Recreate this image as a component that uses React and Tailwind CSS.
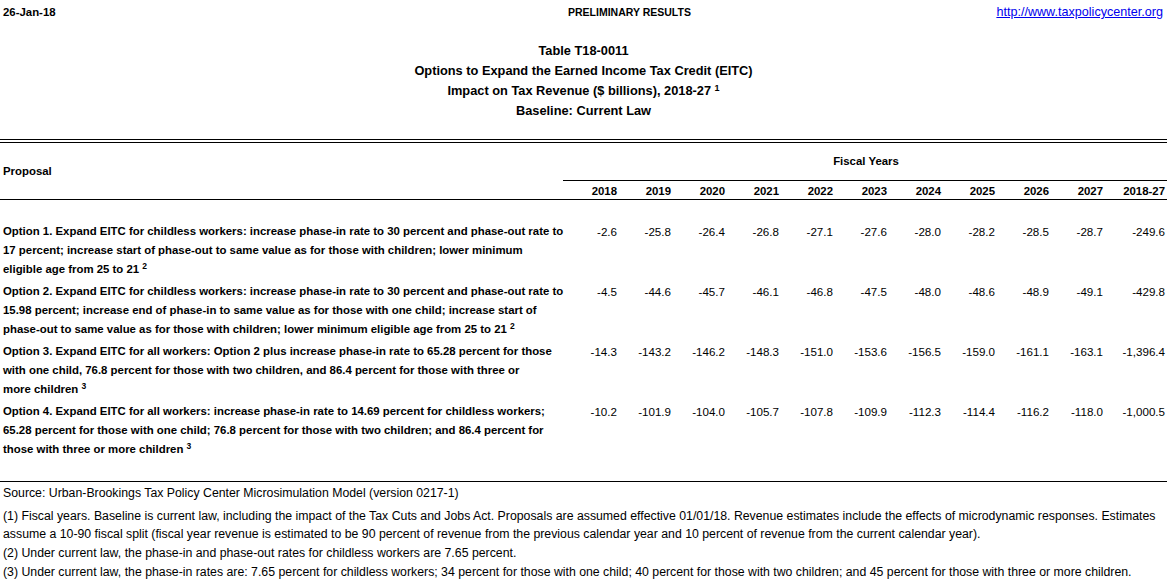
const years = ['2018', '2019', '2020', '2021', '2022', '2023', '2024', '2025', '2026', '2027'];

const rows = [
  {
    lines: [
      'Option 1. Expand EITC for childless workers: increase phase-in rate to 30 percent and phase-out rate to',
      '17 percent; increase start of phase-out to same value as for those with children; lower minimum',
      'eligible age from 25 to 21',
    ],
    note: '2',
    vals: ['-2.6', '-25.8', '-26.4', '-26.8', '-27.1', '-27.6', '-28.0', '-28.2', '-28.5', '-28.7', '-249.6'],
  },
  {
    lines: [
      'Option 2. Expand EITC for childless workers: increase phase-in rate to 30 percent and phase-out rate to',
      '15.98 percent; increase end of phase-in to same value as for those with one child; increase start of',
      'phase-out to same value as for those with children; lower minimum eligible age from 25 to 21',
    ],
    note: '2',
    vals: ['-4.5', '-44.6', '-45.7', '-46.1', '-46.8', '-47.5', '-48.0', '-48.6', '-48.9', '-49.1', '-429.8'],
  },
  {
    lines: [
      'Option 3. Expand EITC for all workers: Option 2 plus increase phase-in rate to 65.28 percent for those',
      'with one child, 76.8 percent for those with two children, and 86.4 percent for those with three or',
      'more children',
    ],
    note: '3',
    vals: ['-14.3', '-143.2', '-146.2', '-148.3', '-151.0', '-153.6', '-156.5', '-159.0', '-161.1', '-163.1', '-1,396.4'],
  },
  {
    lines: [
      'Option 4. Expand EITC for all workers: increase phase-in rate to 14.69 percent for childless workers;',
      '65.28 percent for those with one child; 76.8 percent for those with two children; and 86.4 percent for',
      'those with three or more children',
    ],
    note: '3',
    vals: ['-10.2', '-101.9', '-104.0', '-105.7', '-107.8', '-109.9', '-112.3', '-114.4', '-116.2', '-118.0', '-1,000.5'],
  },
];

const cols = 'grid grid-cols-[563px_repeat(10,54px)_1fr]';

export default function App() {
  return (
    <div className="w-[1167px] h-[581px] overflow-hidden bg-white text-black font-['Liberation_Sans',Arial,sans-serif]">
      {/* top strip */}
      <div className="grid grid-cols-[568px_150px_1fr] pt-[5px] leading-[15px]">
        <div className="pl-[3px] font-bold text-[11.4px]">26-Jan-18</div>
        <div className="font-bold whitespace-nowrap text-[10.5px]">PRELIMINARY RESULTS</div>
        <div className="text-right pr-[4px] text-[12.6px]">
          <a href="#" className="text-[#0000ee] underline">http://www.taxpolicycenter.org</a>
        </div>
      </div>

      {/* title */}
      <div className="mt-[21px] text-center font-bold text-[12.8px] leading-[20px]">
        <div>Table T18-0011</div>
        <div>Options to Expand the Earned Income Tax Credit (EITC)</div>
        <div>
          Impact on Tax Revenue ($ billions), 2018-27 <sup className="text-[9px]">1</sup>
        </div>
        <div>Baseline: Current Law</div>
      </div>

      <div className="mt-[18px] h-[4px] border-y border-black" />

      {/* header */}
      <div className={`${cols} border-b border-black text-[11.4px] font-bold`}>
        <div className="row-span-2 flex items-center pl-[3px] pt-[2px]">Proposal</div>
        <div className="col-span-11 flex items-center justify-center h-[38px] pt-0 pl-[2px] border-b border-black">Fiscal Years</div>
        {years.map((y) => (
          <div key={y} className="text-right h-[18px] leading-[20px]">{y}</div>
        ))}
        <div className="text-right pr-[2px] h-[18px] leading-[20px]">2018-27</div>
      </div>

      {/* body */}
      <div className="pt-[22px] pb-[19px] border-b border-black">
        {rows.map((r, i) => (
          <div key={i} className={`${cols} h-[60px] leading-[19px]`}>
            <div className="pl-[3px] font-bold whitespace-nowrap text-[11.4px]">
              {r.lines.map((l, j) => (
                <div key={j}>
                  {l}
                  {j === r.lines.length - 1 && <> <sup className="text-[8.5px]">{r.note}</sup></>}
                </div>
              ))}
            </div>
            {r.vals.map((v, j) => (
              <div key={j} className={`text-right text-[11.6px] ${j === 10 ? 'pr-[2px]' : ''}`}>{v}</div>
            ))}
          </div>
        ))}
      </div>

      {/* notes */}
      <div className="pl-[3px] pt-[2px] text-[12.3px] leading-[18px] whitespace-nowrap">
        <div className="mb-[5px]">Source: Urban-Brookings Tax Policy Center Microsimulation Model (version 0217-1)</div>
        <div>
          (1) Fiscal years. Baseline is current law, including the impact of the Tax Cuts and Jobs Act. Proposals are assumed effective 01/01/18. Revenue estimates include the effects of microdynamic responses. Estimates
        </div>
        <div>
          assume a 10-90 fiscal split (fiscal year revenue is estimated to be 90 percent of revenue from the previous calendar year and 10 percent of revenue from the current calendar year).
        </div>
        <div className="mt-[1px]">(2) Under current law, the phase-in and phase-out rates for childless workers are 7.65 percent.</div>
        <div className="mt-[1px]">
          (3) Under current law, the phase-in rates are: 7.65 percent for childless workers; 34 percent for those with one child; 40 percent for those with two children; and 45 percent for those with three or more children.
        </div>
      </div>
    </div>
  );
}
